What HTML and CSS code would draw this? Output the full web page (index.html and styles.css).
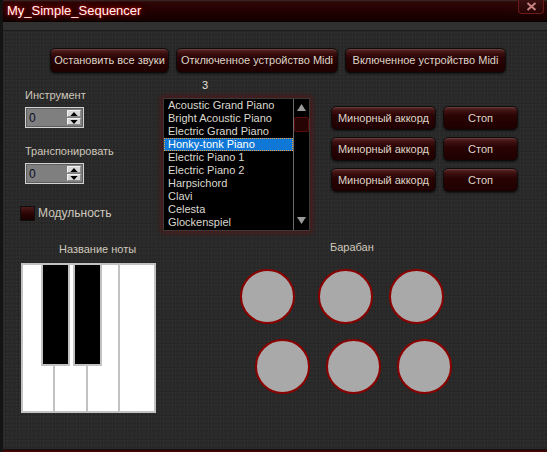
FILE: index.html
```html
<!DOCTYPE html>
<html lang="ru">
<head>
<meta charset="utf-8">
<title>My_Simple_Sequencer</title>
<link rel="stylesheet" href="styles.css">
</head>
<body>
<div class="window">
  <div class="titlebar">
    <span class="title">My_Simple_Sequencer</span>
    <span class="close"><svg width="11" height="9" viewBox="0 0 11 9"><path d="M1.5 1 L9.5 8 M9.5 1 L1.5 8" stroke="#c98080" stroke-width="2" fill="none"/></svg></span>
  </div>
  <div class="menuband"></div>
  <div class="client">
    <div class="toprow">
      <button class="btn w-stop-all">Остановить все звуки</button>
      <button class="btn w-midi-off">Отключенное устройство Midi</button>
      <button class="btn w-midi-on">Включенное устройство Midi</button>
    </div>

    <div class="middle">
      <div class="leftcol">
        <div class="label first">Инструмент</div>
        <div class="spin">
          <span class="spin-value">0</span>
          <span class="spin-btns">
            <span class="spin-btn"><svg width="9" height="5" viewBox="0 0 9 5"><path d="M0 5 L4.5 0 L9 5 Z" fill="#000"/></svg></span>
            <span class="spin-btn"><svg width="9" height="5" viewBox="0 0 9 5"><path d="M0 0 L4.5 5 L9 0 Z" fill="#000"/></svg></span>
          </span>
        </div>
        <div class="label second">Транспонировать</div>
        <div class="spin">
          <span class="spin-value">0</span>
          <span class="spin-btns">
            <span class="spin-btn"><svg width="9" height="5" viewBox="0 0 9 5"><path d="M0 5 L4.5 0 L9 5 Z" fill="#000"/></svg></span>
            <span class="spin-btn"><svg width="9" height="5" viewBox="0 0 9 5"><path d="M0 0 L4.5 5 L9 0 Z" fill="#000"/></svg></span>
          </span>
        </div>
        <label class="check">
          <span class="checkbox"></span>
          <span class="check-text">Модульность</span>
        </label>
      </div>

      <div class="listcol">
        <div class="count">3</div>
        <div class="listbox">
          <ul class="items">
            <li>Acoustic Grand Piano</li>
            <li>Bright Acoustic Piano</li>
            <li>Electric Grand Piano</li>
            <li class="selected">Honky-tonk Piano</li>
            <li>Electric Piano 1</li>
            <li>Electric Piano 2</li>
            <li>Harpsichord</li>
            <li>Clavi</li>
            <li>Celesta</li>
            <li>Glockenspiel</li>
          </ul>
          <div class="scrollbar">
            <span class="arrow"><svg width="9" height="7" viewBox="0 0 9 7"><path d="M0 7 L4.5 0 L9 7 Z" fill="#9a9a9a"/></svg></span>
            <span class="thumb"></span>
            <span class="track"></span>
            <span class="arrow"><svg width="9" height="7" viewBox="0 0 9 7"><path d="M0 0 L4.5 7 L9 0 Z" fill="#9a9a9a"/></svg></span>
          </div>
        </div>
      </div>

      <div class="chords">
        <button class="btn chord">Минорный аккорд</button>
        <button class="btn stop">Стоп</button>
        <button class="btn chord">Минорный аккорд</button>
        <button class="btn stop">Стоп</button>
        <button class="btn chord">Минорный аккорд</button>
        <button class="btn stop">Стоп</button>
      </div>
    </div>

    <div class="bottom">
      <div class="pianocol">
        <div class="label note-name">Название ноты</div>
        <div class="piano">
          <div class="white"></div>
          <div class="white"></div>
          <div class="white"></div>
          <div class="white"></div>
          <div class="black k1"></div>
          <div class="black k2"></div>
        </div>
      </div>
      <div class="drumcol">
        <div class="label drum-title">Барабан</div>
        <div class="drumrow row1">
          <span class="drum"></span><span class="drum"></span><span class="drum"></span>
        </div>
        <div class="drumrow row2">
          <span class="drum"></span><span class="drum"></span><span class="drum"></span>
        </div>
      </div>
    </div>
  </div>
  <div class="bottomedge"></div>
</div>
</body>
</html>
```

FILE: styles.css
```css
* { box-sizing: border-box; }

html, body {
  margin: 0;
  padding: 0;
  width: 547px;
  height: 452px;
  overflow: hidden;
  background: #2a2a2a;
  font-family: "Liberation Sans", Arial, sans-serif;
  font-size: 11px;
  line-height: 13px;
}

.window {
  width: 547px;
  height: 452px;
  display: flex;
  flex-direction: column;
  border-left: 3px solid #141414;
}

.titlebar {
  height: 22px;
  flex: none;
  display: flex;
  justify-content: space-between;
  align-items: flex-start;
  background: linear-gradient(to bottom, #3b2c2c 0, #2e0606 2px, #250202 45%, #120000 100%);
  box-shadow: inset 0 -1px 0 #0a0000;
}

.title {
  margin: 3px 0 0 4px;
  font-size: 13px;
  line-height: 16px;
  color: #fff4f4;
  text-shadow: 0 0 2px #d00000, 0 0 5px #a00000, 0 0 9px #700000;
}

.close {
  width: 26px;
  height: 14px;
  margin-right: 3px;
  display: flex;
  align-items: center;
  justify-content: center;
  background: linear-gradient(#3c1010, #260404);
  border: 1px solid #6b1a1a;
  border-top: none;
  border-radius: 0 0 4px 4px;
}

.menuband {
  height: 9px;
  flex: none;
  background: #303030;
  border-bottom: 1px solid #1c1c1c;
}

.client {
  flex: 1;
  display: flex;
  flex-direction: column;
  padding-top: 17px;
  background-color: #2a2a2a;
  background-image:
    radial-gradient(rgba(255,255,255,0.035) 1px, transparent 1px),
    radial-gradient(rgba(0,0,0,0.12) 1px, transparent 1px);
  background-size: 3px 3px, 4px 4px;
  background-position: 0 0, 1px 2px;
}

.bottomedge {
  height: 3px;
  flex: none;
  background: linear-gradient(#101010 0, #101010 1px, #3a0000 1px, #4a0606 3px);
}

/* buttons */
.btn {
  font-family: inherit;
  font-size: 11px;
  line-height: 13px;
  color: #ddd5c8;
  padding: 0;
  height: 25px;
  border: 1px solid #0c0c0c;
  border-radius: 5px;
  background: linear-gradient(to bottom, #5a2a2a 0, #3e1010 4px, #2a0303 9px, #1e0000 100%);
  box-shadow: 0 1px 2px rgba(0,0,0,0.6), inset 0 1px 0 rgba(255,200,200,0.12);
  cursor: pointer;
}

.toprow {
  display: flex;
  gap: 7px;
  padding-left: 47px;
}
.w-stop-all { width: 119px; }
.w-midi-off { width: 162px; }
.w-midi-on { width: 161px; }

/* middle */
.middle {
  display: flex;
  align-items: flex-start;
  padding-left: 17px;
  padding-top: 6px;
  height: 158px;
}

.label {
  color: #cfc8bc;
  white-space: nowrap;
}

.leftcol {
  width: 143px;
  flex: none;
  display: flex;
  flex-direction: column;
  align-items: flex-start;
}
.leftcol .label { margin-left: 5px; }
.label.first { margin-top: 10px; }
.label.second { margin-top: 17px; }

.spin {
  margin: 5px 0 0 5px;
  width: 59px;
  height: 21px;
  display: flex;
  justify-content: space-between;
  align-items: center;
  background: #7f7f7f;
  border: 1px solid #d2d2d2;
  box-shadow: inset 0 0 0 1px #5e5e5e;
  padding: 0 2px 0 3px;
}
.spin-value {
  color: #0c0c24;
  font-size: 12px;
  line-height: 14px;
}
.spin-btns {
  display: flex;
  flex-direction: column;
  gap: 1px;
}
.spin-btn {
  width: 14px;
  height: 7px;
  background: #d8d8d8;
  border: 1px solid #f2f2f2;
  border-right-color: #8a8a8a;
  border-bottom-color: #8a8a8a;
  display: flex;
  align-items: center;
  justify-content: center;
}
.spin-btn svg { width: 8px; height: 4px; }

.check {
  margin-top: 22px;
  display: flex;
  align-items: center;
  gap: 3px;
}
.checkbox {
  width: 15px;
  height: 15px;
  border: 1px solid #0e0e0e;
  background: linear-gradient(to bottom, #4e1a1a 0, #2c0505 50%, #180000 100%);
}
.check-text {
  color: #cfc8bc;
  font-size: 12px;
}

.listcol {
  width: 147px;
  flex: none;
  display: flex;
  flex-direction: column;
}
.count {
  margin-left: 39px;
  color: #e6e0d8;
}
.listbox {
  margin-top: 6px;
  height: 133px;
  display: flex;
  background: #000;
  border: 1px solid #3a3a3a;
  box-shadow: 0 0 5px 2px rgba(110, 10, 10, 0.55);
}
.items {
  list-style: none;
  margin: 0;
  padding: 0;
  flex: 1;
}
.items li {
  height: 13px;
  line-height: 13px;
  padding-left: 4px;
  color: #ddd8d0;
  white-space: nowrap;
}
.items li.selected {
  background: #0f78d6;
  color: #ffffff;
  outline: 1px dotted #f2a23a;
  outline-offset: -1px;
}
.scrollbar {
  width: 16px;
  flex: none;
  display: flex;
  flex-direction: column;
  align-items: center;
  border-left: 1px solid #6a6a6a;
  padding-top: 4px;
  padding-bottom: 5px;
}
.arrow { height: 9px; display: flex; align-items: center; }
.thumb {
  margin-top: 5px;
  width: 15px;
  height: 15px;
  background: #260404;
  border: 1px solid #5c0b0b;
  border-radius: 2px;
}
.track { flex: 1; }

.chords {
  margin-left: 21px;
  margin-top: 27px;
  display: grid;
  grid-template-columns: 105px 75px;
  grid-auto-rows: 24px;
  column-gap: 7px;
  row-gap: 7px;
}
.chords .btn { height: 24px; }

/* bottom */
.bottom {
  display: flex;
  align-items: flex-start;
  padding-left: 18px;
}
.pianocol {
  width: 219px;
  flex: none;
  display: flex;
  flex-direction: column;
}
.note-name {
  margin-top: 12px;
  margin-left: 38px;
}
.piano {
  position: relative;
  margin-top: 7px;
  width: 135px;
  height: 150px;
  padding: 2px;
  background: #c2c2c2;
  display: grid;
  grid-template-columns: 30px 31px 30px 1fr;
  column-gap: 2px;
}
.white { background: #ffffff; }
.black {
  position: absolute;
  top: 0;
  width: 29px;
  height: 103px;
  background: #000;
  border: 2px solid #c2c2c2;
}
.k1 { left: 20px; }
.k2 { left: 52px; }

.drumcol {
  display: flex;
  flex-direction: column;
}
.drum-title {
  margin-top: 10px;
  margin-left: 90px;
}
.drumrow { display: flex; }
.row1 { margin-top: 15px; gap: 23px; }
.row1 .drum:last-child { margin-left: -7px; }
.row2 { margin-top: 15px; gap: 16px; padding-left: 15px; }
.drum {
  width: 55px;
  height: 55px;
  border-radius: 50%;
  background: #a9a9a9;
  border: 2px solid #8b0000;
}
```
